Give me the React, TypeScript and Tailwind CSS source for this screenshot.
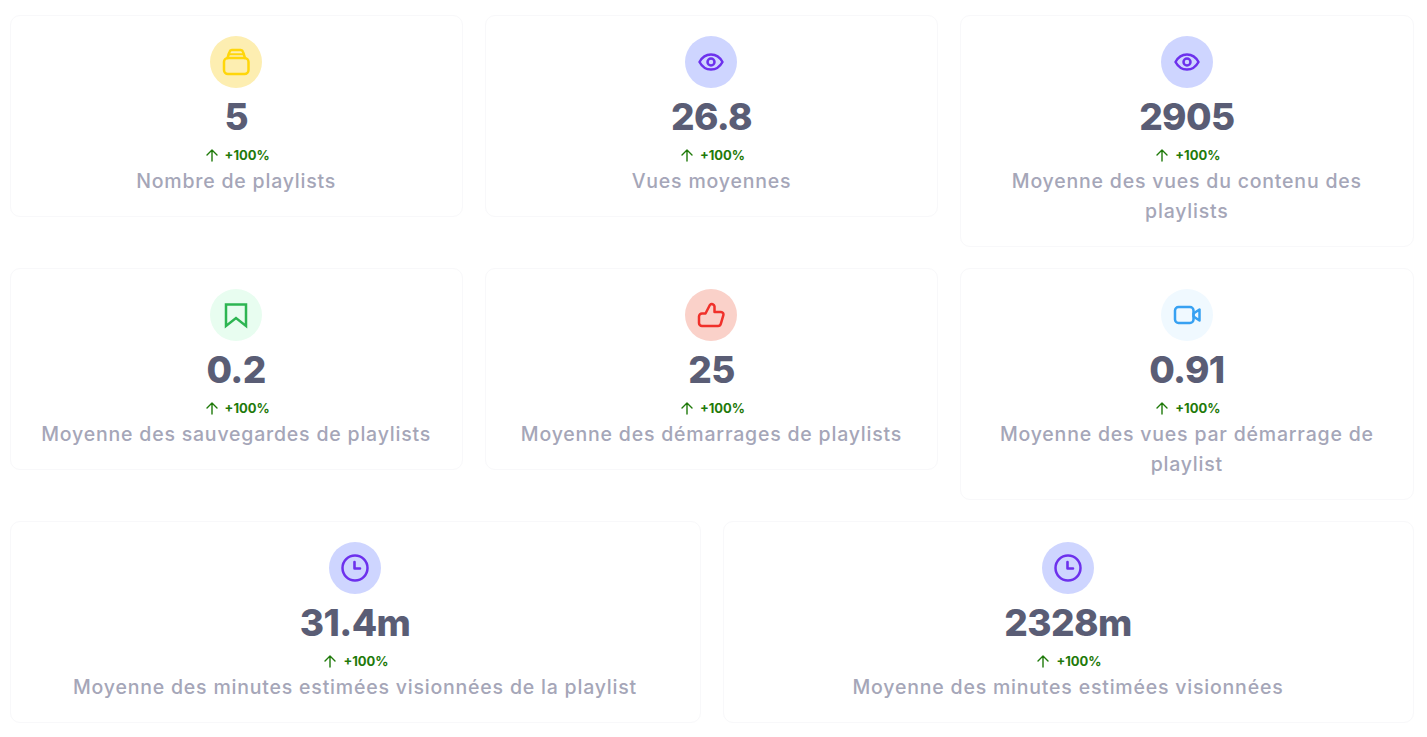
import React from "react";

const S = { fill: "none", strokeWidth: 2.5, strokeLinecap: "round" as const, strokeLinejoin: "round" as const, stroke: "currentColor" };

function Stack() {
  return (
    <svg width="28" height="28" viewBox="0 0 28 28" {...S}>
      <rect x="2" y="10" width="24.500" height="16" rx="4" />
      <path d="M5.500 10 7.500 3.800A2.500 2.500 0 0 1 9.800 2H18.700A2.500 2.500 0 0 1 21 3.800L23 10" />
      <path d="M6.500 6.200H22" strokeWidth="2" />
    </svg>
  );
}
function Eye() {
  return (
    <svg width="28" height="28" viewBox="0 0 28 28" {...S}>
      <path d="M2.500 14C5.200 9 9.200 6.500 14 6.500S22.800 9 25.500 14C22.800 19 18.800 21.500 14 21.500S5.200 19 2.500 14Z" />
      <circle cx="14" cy="14" r="3.500" />
    </svg>
  );
}
function Bookmark() {
  return (
    <svg width="28" height="28" viewBox="0 0 28 28" {...S} strokeLinejoin="miter" strokeLinecap="butt">
      <path d="M4 3.500H24V25L14 17 4 25Z" />
    </svg>
  );
}
function Thumb() {
  return (
    <svg width="28" height="28" viewBox="0 0 28 28" {...S}>
      <path d="M2 15.500A3 3 0 0 1 5 12.500H8.500L13 3.800A2.700 2.700 0 0 1 17.500 5.300V11H24A2.500 2.500 0 0 1 26.300 14.300L23.800 22.800A3 3 0 0 1 21 25H5A3 3 0 0 1 2 22Z" />
    </svg>
  );
}
function Video() {
  return (
    <svg width="28" height="28" viewBox="0 0 28 28" {...S}>
      <rect x="2" y="6" width="18.500" height="16" rx="3.500" />
      <path d="M20.500 12.500 26.500 8.500V19.500L20.500 15.500Z" />
    </svg>
  );
}
function Clock() {
  return (
    <svg width="30" height="30" viewBox="0 0 30 30" {...S}>
      <circle cx="15" cy="15" r="12.500" />
      <path d="M14.500 9V15.500H20" strokeWidth="2.600" />
    </svg>
  );
}
function Arrow() {
  return (
    <svg width="14" height="14" viewBox="0 0 14 14" fill="none" stroke="#1F7A0A" strokeWidth="1.400" strokeLinecap="round" strokeLinejoin="round">
      <path d="M7 13V2M2 7l5-5 5 5" />
    </svg>
  );
}

type CardProps = { icon: React.ReactNode; circle: string; value: string; label: string; span: string };

function Card({ icon, circle, value, label, span }: CardProps) {
  return (
    <div className={`${span} flex flex-col items-center rounded-[10px] border border-[#f8f8fa] bg-white px-5 pt-[20px] pb-[20px] text-center`}>
      <div className={`flex h-[52px] w-[52px] items-center justify-center rounded-full ${circle}`}>{icon}</div>
      <div className="mt-[4px] text-[37px] leading-[50px] font-extrabold tracking-[-0.6px] text-[#5A5D75]">{value}</div>
      <div className="mt-[4px] flex h-[18px] items-center gap-[6px] pl-[2px] text-[13px] leading-[18px] font-bold text-[#1F7A0A]">
        <Arrow />
        <span>+100%</span>
      </div>
      <div className="mt-[2px] text-[19.500px] leading-[30px] font-medium tracking-[0.8px] text-[#A5A6B8]">{label}</div>
    </div>
  );
}

export default function App() {
  return (
    <div className="min-h-[737px] bg-white pt-[15px] pr-[13.500px] pl-[9.500px] font-['Inter',sans-serif]">
      <div className="grid grid-cols-6 items-start gap-x-[22px] gap-y-[21px]">
        <Card span="col-span-2" circle="bg-[#FDEEB1] text-[#FFD60A]" icon={<Stack />} value="5" label="Nombre de playlists" />
        <Card span="col-span-2" circle="bg-[#CED5FF] text-[#6D31ED]" icon={<Eye />} value="26.8" label="Vues moyennes" />
        <Card span="col-span-2" circle="bg-[#CED5FF] text-[#6D31ED]" icon={<Eye />} value="2905" label="Moyenne des vues du contenu des playlists" />
        <Card span="col-span-2" circle="bg-[#E8FDF0] text-[#2DB552]" icon={<Bookmark />} value="0.2" label="Moyenne des sauvegardes de playlists" />
        <Card span="col-span-2" circle="bg-[#FAD1C9] text-[#F0302A]" icon={<Thumb />} value="25" label="Moyenne des démarrages de playlists" />
        <Card span="col-span-2" circle="bg-[#F0F9FF] text-[#37A1F2]" icon={<Video />} value="0.91" label="Moyenne des vues par démarrage de playlist" />
        <Card span="col-span-3" circle="bg-[#CED5FF] text-[#6D31ED]" icon={<Clock />} value="31.4m" label="Moyenne des minutes estimées visionnées de la playlist" />
        <Card span="col-span-3" circle="bg-[#CED5FF] text-[#6D31ED]" icon={<Clock />} value="2328m" label="Moyenne des minutes estimées visionnées" />
      </div>
    </div>
  );
}
